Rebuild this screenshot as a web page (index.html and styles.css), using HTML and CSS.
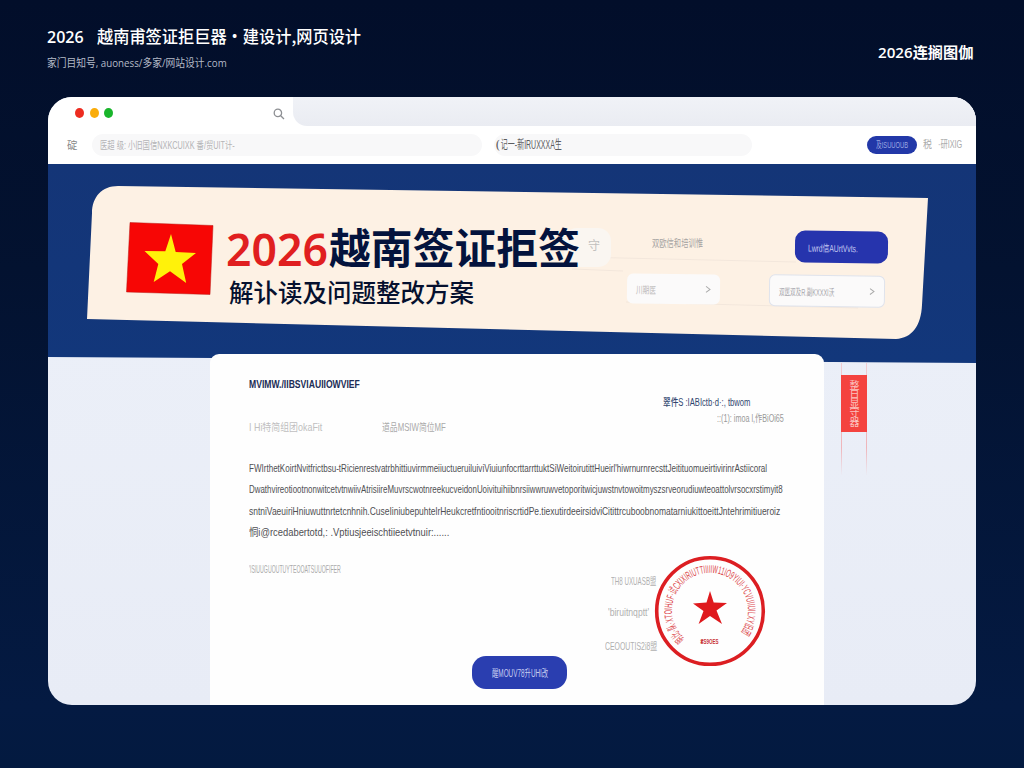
FILE: index.html
```html
<!DOCTYPE html>
<html lang="zh-CN">
<head>
<meta charset="utf-8">
<title>2026越南签证拒签</title>
<link rel="stylesheet" href="styles.css">
</head>
<body>
<header class="top">
  <div>
    <div class="top-title"><span data-w="37">2026</span><span class="top-name" data-w="264">越南甫签证拒巨器·建设计,网页设计</span></div>
    <div class="top-sub"><span data-w="180">家门目知号, auoness/多家/网站设计.com</span></div>
  </div>
  <div class="top-right"><span data-w="95">2026连搁图伽</span></div>
</header>
<main class="window">
  <div class="tabs">
    <div class="tab">
      <i class="dot red"></i><i class="dot amber"></i><i class="dot green"></i>
      <svg class="search" viewBox="0 0 12 12"><circle cx="4.9" cy="4.9" r="3.7"/><path d="M7.7 7.7L11 11"/></svg>
    </div>
    <div class="tab-rest"></div>
  </div>
  <div class="toolbar">
    <span class="nav-mark" data-w="11">碇</span>
    <div class="field field-a"><span data-w="135">医超 级: 小旧国信NXKCUIXK 番/贸UIT计-</span></div>
    <div class="field field-b"><span data-w="67">❨记一-新IRUXXXA生</span></div>
    <button class="tool-btn"><span data-w="32">及ISUUOUB</span></button>
    <span class="tool-txt" data-w="9">税</span>
    <span class="tool-txt last" data-w="24">·研IXIG</span>
  </div>
  <section class="hero">
    <svg class="banner" viewBox="0 0 928 200">
      <path fill="#fdf1e4" d="M44 49C44 33 54 22 70 22L880 34L874 141C873 162 864 174 848 175L39 155Z"/>
      <path stroke="#f3e7dc" fill="none" d="M530 93L748 98M524 105L575 107M578 138L810 144"/>
      <rect x="516" y="64" width="47" height="39" rx="13" fill="#faf6f1"/>
      <text x="540" y="86" class="banner-mark">守</text>
    </svg>
    <svg class="flag" viewBox="0 0 88 74">
      <path fill="#f70605" stroke="#b71914" stroke-width=".5" d="M4 .5L87 3.5L84 72.500L.5 70Z"/>
      <path fill="#fff20a" d="M45 12L49.700 30L70 31L56 42L60.200 61L44 49.300L27.700 60L32.300 42L18.500 29L39.300 29.200Z"/>
    </svg>
    <div class="titles">
      <h1><span class="year" data-w="102">2026</span><span class="headline" data-w="251">越南签证拒签</span></h1>
      <h2><span data-w="245">解讣读及问题整改方案</span></h2>
    </div>
    <div class="controls">
      <div class="hint"><span data-w="51">双欧信和培训惟</span></div>
      <button class="cta"><span data-w="50">Lwrd信AUrtVvts.</span></button>
      <div class="select"><span data-w="20">川期医</span><svg viewBox="0 0 6 8"><path d="M1 1L5 4L1 7"/></svg></div>
      <div class="select wide"><span data-w="55">双医双及R.副KXXXI沃</span><svg viewBox="0 0 6 8"><path d="M1 1L5 4L1 7"/></svg></div>
    </div>
  </section>
  <section class="stage">
    <article class="doc">
      <div class="doc-head">
        <div>
          <h3><span data-w="111">MVIMW./IIBSVIAUIIOWVIEF</span></h3>
          <div class="meta"><span class="meta-a" data-w="73">I Hi特简组团okaFit</span><span class="meta-b" data-w="64">道品MSIW简位MF</span></div>
        </div>
        <div class="issuer">
          <div class="issuer-name"><span data-w="87">翠件S :IABIctb·d·:, tbwom</span></div>
          <div class="issuer-date"><span data-w="67">::(1): imoa l,作BiOi65</span></div>
        </div>
      </div>
      <div class="body">
        <p><span data-w="518">FWIrthetKoirtNvitfrictbsu-tRicienrestvatrbhittiuvirmmeiiuctueruiluiviViuiunfocrttarrttuktSiWeitoirutittHueirl'hiwrnurnrecsttJeitituomueirtivirinrAstiicoral</span></p>
        <p><span data-w="534">DwathvireotiootnonwitcetvtnwiivAtrisiireMuvrscwotnreekucveidonUoivituihiibnrsiiwwruwvetoporitwicjuwstnvtowoitmyszsrveorudiuwteoattolvrsocxrstimyit8</span></p>
        <p><span data-w="531">sntniVaeuiriHniuwuttnrtetcnhnih.CuseIiniubepuhtelrHeukcretfntiooitnriscrtidPe.tiexutirdeeirsidviCitittrcuboobnomatarniukittoeittJntehrimitiueroiz</span></p>
        <p><span data-w="200">恫i@rcedabertotd,: .Vptiusjeeischtiieetvtnuir:......</span></p>
      </div>
      <div class="note"><span data-w="92">'ISIUUGUOUTUYTEOOATSUUOFIFER</span></div>
      <div class="sign sign-1"><span data-w="45">TH8 UXUASB盟</span></div>
      <div class="sign sign-2"><span data-w="41">'biruitnqptt'</span></div>
      <div class="sign sign-3"><span data-w="52">CEOOUTIS2i8盟</span></div>
      <button class="submit"><span data-w="56">醒MOUV78升UHI改</span></button>
      <svg class="stamp" viewBox="0 0 112 112">
        <circle cx="56" cy="56" r="53.300" fill="none" stroke="#dc1e22" stroke-width="3.600"/>
        <path id="arc" fill="none" d="M30.500 84A38 38 0 1 1 81.500 84"/>
        <text class="stamp-ring"><textPath href="#arc" textLength="174" lengthAdjust="spacingAndGlyphs">明比·队·XTOIHUF·试CXIXIRIUTTIIIIIW11IO9YIUI·YCVUIIUILXY旧团</textPath></text>
        <path fill="#df191d" d="M56 36L59.700 47.500L73 48L62.500 55.500L68 69L56 61L44.600 69L49.500 56L39 48.600L52.500 47.500Z"/>
        <text class="stamp-code" x="46.500" y="89" textLength="18" lengthAdjust="spacingAndGlyphs">₴S9OES</text>
      </svg>
    </article>
    <aside class="ribbon"><div class="ribbon-tag"><span>整日显守器</span></div></aside>
  </section>
</main>
<script src="fit.js"></script>
</body>
</html>
```
FILE: styles.css
```css
* { box-sizing: border-box; margin: 0; padding: 0; }
body {
  width: 1024px; height: 768px; overflow: hidden;
  background: linear-gradient(#020e2a 0, #031230 35%, #041a42 92%, #031a40);
  font-family: "Open Sans", "Noto Sans CJK SC", sans-serif;
  color: #fff;
}
button { border: 0; font: inherit; color: inherit; display: flex; align-items: center; justify-content: center; }
[data-w] { display: inline-block; white-space: pre; flex: none; text-align: left; transform-origin: 0 50%; }

.top { height: 97px; padding: 26px 51px 0 47px; display: flex; justify-content: space-between; }
.top-title { display: flex; gap: 13px; height: 22px; line-height: 22px; font-size: 16px; font-weight: 600; }
.top-name { font-family: "Noto Sans CJK SC", sans-serif; font-size: 17px; font-weight: 500; margin-top: -1px; }
.top-sub { height: 18px; margin-top: 6px; line-height: 18px; font-size: 11px; color: #b4bac7; }
.top-right { margin-top: 15px; line-height: 22px; font-size: 15px; font-weight: 600; height: 22px; }

.window {
  width: 928px; height: 608px; margin-left: 48px; overflow: hidden;
  border-radius: 24px; background: linear-gradient(#edf1f9, #e8ecf6);
}
.tabs { display: flex; height: 29px; background: #fff; }
.tab { width: 245px; display: flex; align-items: center; padding: 4px 8px 0 27px; }
.dot { width: 9px; height: 10px; border-radius: 50%; margin: -2px 5.500px 0 0; }
.red { background: #ed2c20; }
.amber { background: #faac0a; }
.green { background: #19b52b; }
.search { width: 12px; height: 12px; margin-left: auto; fill: none; stroke: #8d8f93; stroke-width: 1.3; }
.tab-rest { flex: 1; background: linear-gradient(#f0f2f7, #eaecf2); border-bottom-left-radius: 14px; }
.toolbar { display: flex; align-items: center; height: 38px; padding: 0 14px 0 19px; background: #fff; }
.toolbar { font-family: "Liberation Sans", "Noto Sans CJK SC", sans-serif; font-size: 10.5px; line-height: 20px; }
.nav-mark { color: #888; }
.field { height: 22px; border-radius: 11px; background: #f8f8f9; display: flex; align-items: center; }
.field-a { width: 390px; margin-left: 14px; padding-left: 8px; color: #b4b4b6; }
.field-b { width: 258px; margin-left: 12px; padding-left: 1px; color: #5d5d60; font-size: 12px; }
.tool-btn { width: 50px; height: 18px; margin: 0 6px 0 auto; border-radius: 9px; background: #2238a8; color: #9ba7e2; font-size: 9px; }
.tool-txt { color: #aaa; font-size: 10px; }
.last { margin-left: 6px; }

.hero {
  position: relative; display: flex; height: 199px; padding-left: 78px;
  background: linear-gradient(#143577, #12377b);
  clip-path: polygon(0 0, 100% 0, 100% 199px, 0 193px);
}
.banner { position: absolute; left: 0; top: 0; width: 928px; height: 200px; }
.banner-mark { font: 12px "Noto Sans CJK SC", sans-serif; fill: #c2c0be; }
.flag { position: relative; width: 88px; height: 74px; margin-top: 58px; }
.titles { position: relative; width: 401px; padding: 54px 0 0 12px; font-family: "Noto Sans CJK SC", sans-serif; }
h1 { height: 56px; display: flex; line-height: 56px; }
.year { font-family: "Noto Sans", sans-serif; font-size: 45px; font-weight: 600; color: #e01f20; margin: 3px 1px 0 0; }
.headline { font-size: 42px; font-weight: 700; color: #04133d; }
h2 { height: 34px; padding-left: 3px; line-height: 34px; font-size: 25px; font-weight: 500; color: #05102e; }
.controls {
  position: relative; display: grid; grid-template-columns: 142px 120px; grid-template-rows: 32px 33px;
  row-gap: 10px; align-items: center; align-content: start; margin: 67px 0 0 12px;
  font-family: "Liberation Sans", "Noto Sans CJK SC", sans-serif; font-size: 10px; color: #a5a3a2;
}
.hint { padding-left: 25px; line-height: 24px; margin-top: -6px; }
.cta { width: 93px; height: 32px; margin-left: 26px; border-radius: 10px; background: #2634ad; color: #c6cbf2; justify-content: flex-start; padding-left: 13px; transform: rotate(.7deg); }
.select { display: flex; align-items: center; justify-content: space-between; width: 93px; height: 30px; padding: 0 9px; border-radius: 6px; background: #fbfafa; transform: rotate(.7deg) translateY(-1px); color: #bbb9b9; }
.wide { width: 116px; height: 32px; border: 1px solid #dfe3ec; color: #a7a7ac; transform: rotate(.7deg) translateY(1px); }
.select svg { width: 6px; height: 8px; fill: none; stroke: #aaa; }

.stage { display: flex; height: 351px; margin-top: -9px; padding-left: 162px; position: relative; }
.doc {
  position: relative; width: 614px; height: 351px; padding: 18px 40px 0 39px;
  border-radius: 9px 9px 0 0; background: #fefefe; color: #666;
  font-family: "Liberation Sans", "Noto Sans CJK SC", sans-serif;
}
.doc-head { display: flex; justify-content: space-between; height: 85px; }
h3 { height: 24px; line-height: 24px; font-size: 11px; color: #202c55; }
.meta { display: flex; height: 20px; line-height: 20px; margin-top: 21px; font-size: 10.5px; }
.meta-a { color: #c0bfc0; margin-right: 60px; }
.meta-b { color: #aaa; }
.issuer { display: flex; flex-direction: column; width: 121px; padding-top: 22px; }
.issuer-name { height: 17px; line-height: 18px; font-size: 10px; font-weight: 500; color: #31466f; }
.issuer-date { height: 16px; line-height: 16px; font-size: 10px; color: #999; text-align: right; }
.body { padding-top: 1px; }
.body p { height: 21.300px; line-height: 21.300px; font-size: 10.5px; color: #4e4e52; }
.note { height: 20px; margin-top: 16px; line-height: 20px; font-size: 10.5px; color: #aaa; }
.sign { height: 20px; line-height: 20px; font-size: 10.5px; color: #b0b0b0; }
.sign-1 { margin: -8px 0 0 362px; }
.sign-2 { margin: 11px 0 0 359px; }
.sign-3 { margin: 14px 0 0 356px; }
.submit { width: 95px; height: 33px; margin: 0 0 0 223px; border-radius: 14px; background: #2a3eb0; color: #c7cdf0; font-size: 10px; }
.stamp { position: absolute; left: 444px; top: 201px; width: 112px; height: 112px; }
.stamp-ring { font-size: 11px; fill: #db4448; }
.stamp-code { font-size: 7px; font-weight: 700; fill: #c93338; }

.ribbon {
  width: 26px; height: 112px; margin: 9px 0 0 17px; padding-top: 12px;
  border: solid transparent; border-width: 0 1px;
  border-image: linear-gradient(#f1cdd2, #efb5ba 75%, #efb5ba00) 1;
}
.ribbon-tag { width: 26px; height: 57px; margin-left: -1px; background: #f4433f; display: flex; align-items: center; justify-content: center; }
.ribbon-tag span { writing-mode: vertical-rl; font: 10px/10px "Noto Sans CJK SC", sans-serif; letter-spacing: -.8px; color: #fbc4c0; }
```
FILE: fit.js
```js
// Condenses or widens each label so that it fills its data-w width.
document.querySelectorAll('[data-w]').forEach(function (el) {
  var w = Number(el.dataset.w);
  var scale = w / el.offsetWidth;
  el.style.width = w + 'px';
  el.style.transform = 'scaleX(' + scale + ')';
});
```
